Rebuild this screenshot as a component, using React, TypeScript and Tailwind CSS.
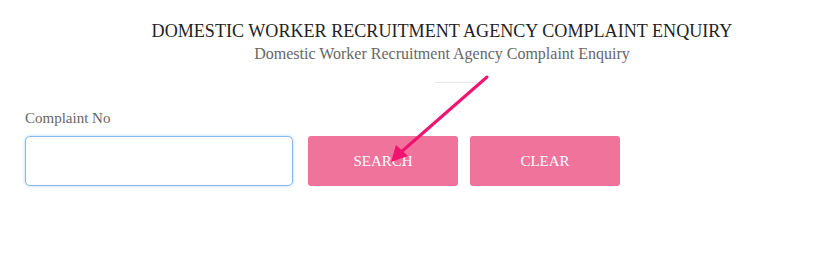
export default function App() {
  return (
    <div className="relative w-[831px] h-[271px] bg-white font-['Liberation_Serif',serif]">
      {/* heading */}
      <div className="pl-[53px] pt-[20px] text-center">
        <h1 className="text-[18.1px] leading-[22px] text-[#222]">
          DOMESTIC WORKER RECRUITMENT AGENCY COMPLAINT ENQUIRY
        </h1>
        <p className="mt-[2px] text-[16px] leading-[19px] text-[#666]">
          Domestic Worker Recruitment Agency Complaint Enquiry
        </p>
        <div className="mx-auto mt-[19px] h-px w-[42px] translate-x-[14px] bg-[#e6e6e6]" />
      </div>

      {/* form */}
      <div className="flex items-end gap-[15px] px-[25px] pt-[26px]">
        <div className="flex flex-col">
          <label className="text-[15px] leading-[18px] text-[#666] mb-[9px]">Complaint No</label>
          <input
            className="h-[50px] w-[268px] rounded-[5px] border border-[#8ab8ee] bg-white shadow-[0_0_3px_#a9cdf5] outline-none"
            type="text"
          />
        </div>
        <button className="h-[50px] w-[150px] rounded-[3px] bg-[#f0739c] text-[15px] text-white uppercase">
          Search
        </button>
        <button className="ml-[-3px] h-[50px] w-[150px] rounded-[3px] bg-[#f0739c] text-[15px] text-white uppercase">
          Clear
        </button>
      </div>

      {/* annotation arrow */}
      <svg className="absolute left-0 top-0 pointer-events-none" width="831" height="271">
        <line x1="487" y1="77" x2="400" y2="153" stroke="#f0136f" strokeWidth="3" strokeLinecap="round" />
        <polygon points="391,162 396,145 408,156" fill="#f0136f" />
      </svg>
    </div>
  );
}
